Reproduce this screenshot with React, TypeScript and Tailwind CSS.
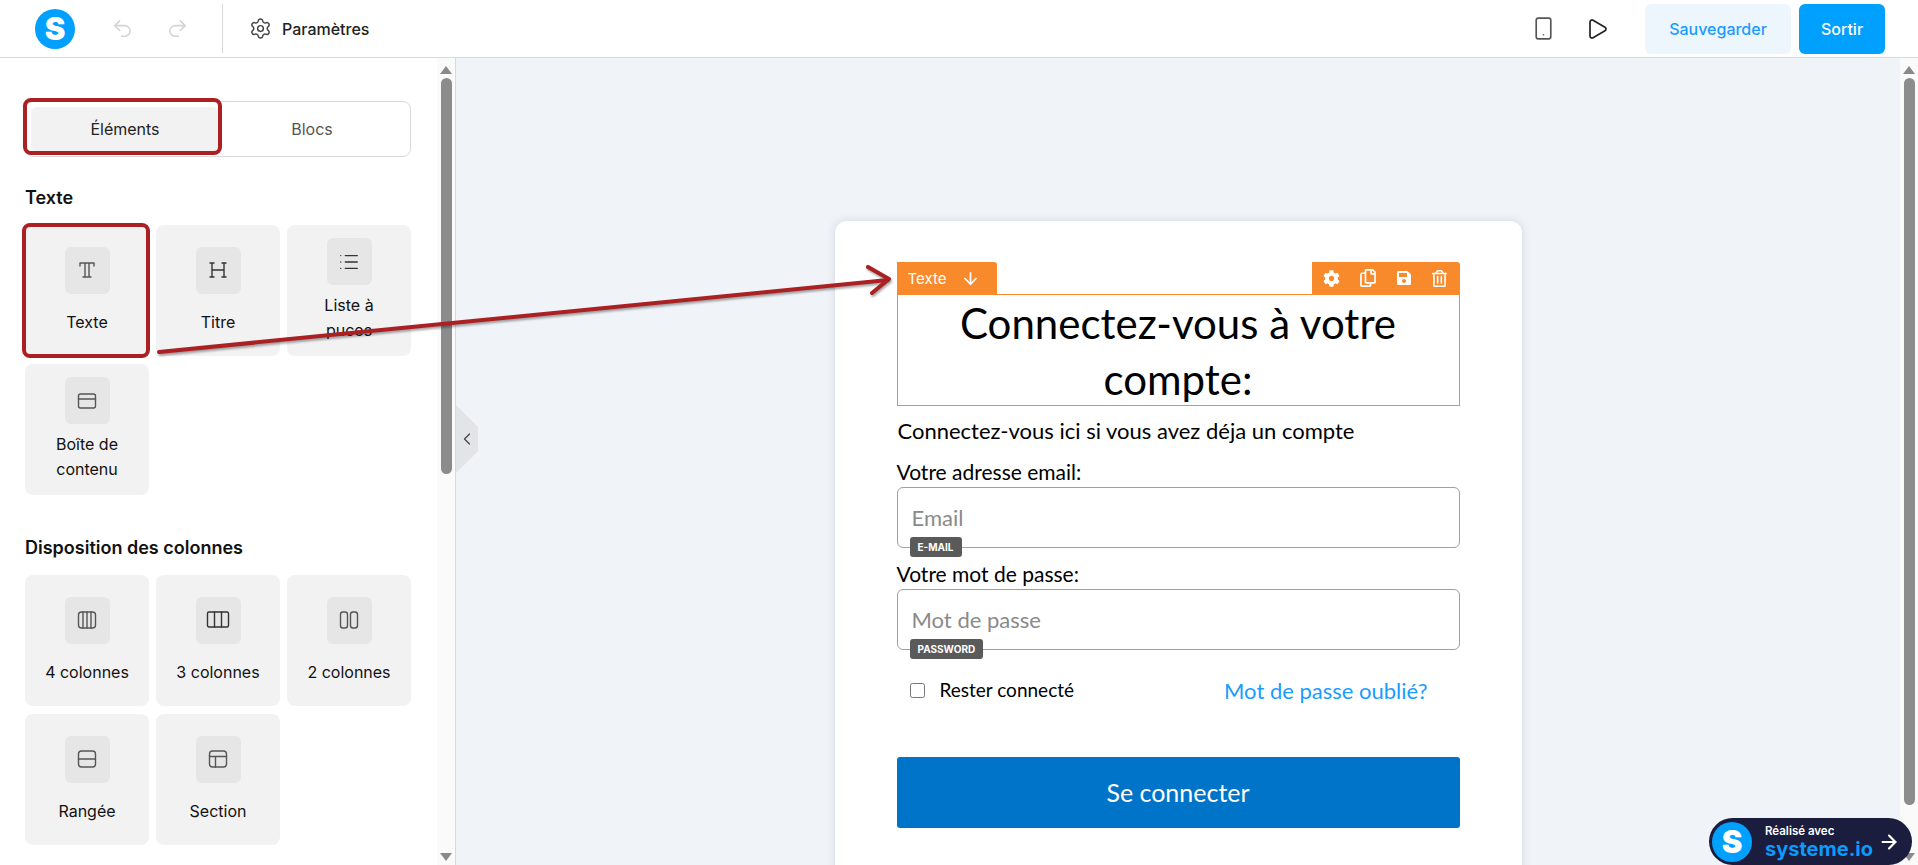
import { ArrowDown, ArrowRight, ChevronLeft, List, Play, Redo2, Settings, Smartphone, Undo2 } from "lucide-react";
import { FaCog, FaRegCopy, FaRegTrashAlt, FaSave } from "react-icons/fa";
import type { ReactNode } from "react";

const INTER = "font-['Inter',sans-serif]";
const CARD_FONT = "font-['Lato','Open_Sans',sans-serif]";

function Glyph({ children }: { children: ReactNode }) {
  return (
    <svg width="24" height="24" viewBox="0 0 24 24" fill="none" stroke="#555" strokeWidth="1.4" strokeLinecap="round" strokeLinejoin="round">
      {children}
    </svg>
  );
}

function Tile({ label, icon, twoLines, marked }: { label: string; icon: ReactNode; twoLines?: boolean; marked?: boolean }) {
  return (
    <div className={`relative h-[131px] rounded-lg bg-[#f2f2f2] px-[15px] flex flex-col items-center justify-center text-center ${twoLines ? "gap-2" : "gap-4"}`}>
      <div className="w-[45px] h-[47px] shrink-0 rounded-md bg-[#e6e6e6] flex items-center justify-center">{icon}</div>
      <span className="text-[16px] leading-[25px] text-[#111]">{label}</span>
      {marked && <div className="absolute -left-[3px] -top-[2px] -right-[1px] -bottom-[2px] rounded-lg border-4 border-[#ab2023]" />}
    </div>
  );
}

function Field({ label, placeholder, badge, type }: { label: string; placeholder: string; badge: string; type: string }) {
  return (
    <div>
      <div className="h-[30px] text-[21px] leading-[30px] text-black">{label}</div>
      <div className="relative">
        <input
          type={type}
          placeholder={placeholder}
          className="block w-full h-[61px] rounded-md border border-[#a0a0a0] bg-white px-[14px] text-[22px] placeholder:text-[#8a8a8a]"
        />
        <span className={`${INTER} absolute left-[13px] top-[50px] h-5 rounded-[3px] bg-[#5a5a5a] px-2 text-[10px] font-bold leading-5 text-white`}>{badge}</span>
      </div>
    </div>
  );
}

function ScrollTrack({ thumb }: { thumb: string }) {
  return (
    <div className="w-[18px] h-full shrink-0 bg-[#fafafa] flex flex-col items-center pt-2 pb-1">
      <div className="h-0 w-0 border-x-[6px] border-b-[8px] border-x-transparent border-b-[#8a8a8a]" />
      <div className={`mt-1 w-[11px] rounded-full bg-[#8c8c8c] ${thumb}`} />
      <div className="mt-auto h-0 w-0 border-x-[6px] border-t-[8px] border-x-transparent border-t-[#8a8a8a]" />
    </div>
  );
}

export default function App() {
  return (
    <div className={`${INTER} relative w-[1918px] h-[865px] overflow-hidden bg-white flex flex-col`}>
      {/* Top bar */}
      <header className="h-[58px] shrink-0 border-b border-[#d9d9d9] flex items-center pl-[35px] pr-[33px]">
        <div className="w-10 h-10 rounded-full bg-[#00a0ff] flex items-center justify-center text-[31px] font-black leading-none text-white">S</div>
        <Undo2 className="ml-9 text-[#d4d4d4]" size={23} strokeWidth={1.6} />
        <Redo2 className="ml-8 text-[#d4d4d4]" size={23} strokeWidth={1.6} />
        <div className="ml-[33px] h-[49px] w-px bg-[#d9d9d9]" />
        <Settings className="ml-[26px] text-[#444]" size={23} strokeWidth={1.5} />
        <span className="ml-[10px] text-[16px] font-medium text-[#222]">Paramètres</span>
        <Smartphone className="ml-auto text-[#555]" size={25} strokeWidth={1.6} />
        <Play className="ml-[29px] text-[#222]" size={24} strokeWidth={1.7} />
        <button className="ml-[36px] h-[50px] w-[146px] rounded-md bg-[#eef6fd] text-[16px] font-medium text-[#1a9cff]">Sauvegarder</button>
        <button className="ml-2 h-[50px] w-[86px] rounded-md bg-[#00a0ff] text-[16px] font-medium text-white">Sortir</button>
      </header>

      <div className="flex flex-1 min-h-0">
        {/* Sidebar */}
        <aside className="w-[456px] shrink-0 border-r border-[#d9d9d9] flex">
          <div className="w-[437px] pl-[25px] pr-[26px] pt-[43px] overflow-hidden">
            <div className="h-14 rounded-lg border border-[#d9d9d9] p-[5px] flex items-center">
              <div className="relative h-[45px] w-[188px] rounded-md bg-[#f2f2f2] flex items-center justify-center text-[16px] text-[#222]">
                Éléments
                <div className="absolute -left-[8px] -top-[9px] -right-[3px] -bottom-[3px] rounded-lg border-4 border-[#ab2023]" />
              </div>
              <div className="flex-1 text-center text-[16px] text-[#555]">Blocs</div>
            </div>

            <h2 className="mt-[28px] text-[18px] leading-[26px] font-semibold text-[#111]">Texte</h2>
            <div className="mt-[14px] grid grid-cols-3 gap-x-[7px] gap-y-2">
              <Tile
                label="Texte"
                marked
                icon={
                  <Glyph>
                    <path d="M5 8V5h14v3M10 5v14M14 5v14M8 19h8" />
                  </Glyph>
                }
              />
              <Tile
                label="Titre"
                icon={
                  <Glyph>
                    <path d="M6 5v14M18 5v14M6 12h12M4 5h4M16 5h4M4 19h4M16 19h4" stroke="#333" />
                  </Glyph>
                }
              />
              <Tile label="Liste à puces" twoLines icon={<List size={22} strokeWidth={1.5} className="text-[#333]" />} />
              <Tile
                label="Boîte de contenu"
                twoLines
                icon={
                  <Glyph>
                    <rect x="3.5" y="5" width="17" height="14" rx="2" />
                    <path d="M3.5 10h17" />
                  </Glyph>
                }
              />
            </div>

            <h2 className="mt-[40px] text-[18px] leading-[26px] font-semibold text-[#111]">Disposition des colonnes</h2>
            <div className="mt-[14px] grid grid-cols-3 gap-x-[7px] gap-y-2">
              <Tile
                label="4 colonnes"
                icon={
                  <Glyph>
                    <rect x="3.5" y="4" width="17" height="16" rx="3" />
                    <path d="M8 4v16M12 4v16M16 4v16" />
                  </Glyph>
                }
              />
              <Tile
                label="3 colonnes"
                icon={
                  <Glyph>
                    <rect x="1.5" y="4" width="21" height="15" rx="1.5" stroke="#333" />
                    <path d="M8.5 4v15M15.5 4v15" stroke="#333" />
                  </Glyph>
                }
              />
              <Tile
                label="2 colonnes"
                icon={
                  <Glyph>
                    <rect x="3.5" y="4" width="7" height="16" rx="2.5" />
                    <rect x="13.5" y="4" width="7" height="16" rx="2.5" />
                  </Glyph>
                }
              />
              <Tile
                label="Rangée"
                icon={
                  <Glyph>
                    <rect x="3.5" y="4" width="17" height="16" rx="3" />
                    <path d="M3.5 12h17" />
                  </Glyph>
                }
              />
              <Tile
                label="Section"
                icon={
                  <Glyph>
                    <rect x="3.5" y="4" width="17" height="16" rx="3" />
                    <path d="M3.5 9.5h17M9.5 9.5V20" />
                  </Glyph>
                }
              />
            </div>
          </div>
          <ScrollTrack thumb="h-[396px]" />
        </aside>

        {/* Canvas */}
        <main className="relative flex-1 min-w-0 bg-[#f0f3f8] flex">
          <div className="absolute left-0 top-[347px] w-[22px] h-[68px] bg-[#e3e4e7] [clip-path:polygon(0_0,100%_32%,100%_68%,0_100%)] flex items-center">
            <ChevronLeft size={20} strokeWidth={1.5} className="text-[#444] ml-px" />
          </div>

          <div className="flex-1 min-w-0 flex justify-center pt-[163px]">
            <div className={`${CARD_FONT} w-[687px] h-[700px] shrink-0 rounded-xl bg-white px-[62px] pt-[74px] shadow-[0_0_8px_rgba(120,135,160,0.25)]`}>
              <div className="relative border border-[#f98a2c] h-[112px] text-center text-[42px] leading-[56px] text-black -mt-px">
                Connectez-vous à votre compte:
                <div className={`${INTER} absolute -left-px -top-[33px] h-8 w-[100px] rounded-tr-[3px] bg-[#f98a2c] flex items-center pl-[11px] text-[15px] leading-none text-white`}>
                  Texte
                  <ArrowDown size={19} strokeWidth={2.2} className="ml-[15px]" />
                </div>
                <div className="absolute -right-px -top-[33px] h-8 w-[148px] rounded-tr-[3px] bg-[#f98a2c] flex items-center justify-between px-[11px] text-white">
                  <FaCog size={17} />
                  <FaRegCopy size={18} />
                  <FaSave size={16} />
                  <FaRegTrashAlt size={17} />
                </div>
              </div>

              <p className="mt-[12px] h-[26px] pl-px text-[22px] leading-[26px] text-black">Connectez-vous ici si vous avez déja un compte</p>
              <div className="mt-[13px]">
                <Field label="Votre adresse email:" placeholder="Email" badge="E-MAIL" type="email" />
              </div>
              <div className="mt-[11px]">
                <Field label="Votre mot de passe:" placeholder="Mot de passe" badge="PASSWORD" type="password" />
              </div>

              <div className="mt-[26px] h-7 flex items-center pl-[13px] pr-[32px]">
                <input type="checkbox" className="w-[15px] h-[15px]" />
                <span className="ml-[15px] text-[19px] text-black">Rester connecté</span>
                <a className="ml-auto text-[22px] text-[#1a9cff]">Mot de passe oublié?</a>
              </div>

              <button className="mt-[53px] block w-full h-[71px] rounded-[3px] bg-[#0074c8] text-[25px] text-white">Se connecter</button>
            </div>
          </div>
          <ScrollTrack thumb="h-[727px]" />
        </main>
      </div>

      {/* Annotation arrow */}
      <svg className="absolute inset-0 pointer-events-none" width="1918" height="865" fill="none">
        <g stroke="#ab2023" strokeWidth="4" strokeLinecap="round" strokeLinejoin="round" style={{ filter: "drop-shadow(1px 2px 1px rgba(0,0,0,0.35))" }}>
          <path d="M159 352 L888 280" />
          <path d="M868 267 L889 279 L872 293" />
        </g>
      </svg>

      {/* Made-with badge */}
      <div className="absolute left-[1709px] top-[818px] w-[203px] h-[47px] rounded-full bg-[#1a1d3d] flex items-center pl-[3px]">
        <div className="w-10 h-10 rounded-full bg-[#00a0ff] flex items-center justify-center text-[31px] font-black leading-none text-white">S</div>
        <div className="ml-[13px] flex flex-col">
          <span className="text-[11.5px] leading-[14px] font-semibold text-white">Réalisé avec</span>
          <span className="text-[20px] leading-[22px] font-bold text-[#0a9bff]">systeme.io</span>
        </div>
        <ArrowRight size={22} strokeWidth={2.4} className="ml-[5px] text-white" />
      </div>
    </div>
  );
}
